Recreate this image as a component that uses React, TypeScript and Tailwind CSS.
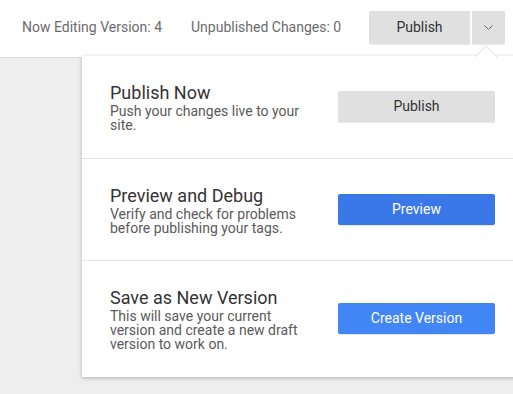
import React from "react";

const sections = [
  {
    title: "Publish Now",
    desc: "Push your changes live to your site.",
    button: "Publish",
    primary: false,
    pb: "pb-[26px]",
  },
  {
    title: "Preview and Debug",
    desc: "Verify and check for problems before publishing your tags.",
    button: "Preview",
    primary: true,
    dark: true,
    pb: "pb-[25px]",
  },
  {
    title: "Save as New Version",
    desc: "This will save your current version and create a new draft version to work on.",
    button: "Create Version",
    primary: true,
    pb: "pb-[26px]",
  },
];

export default function App() {
  return (
    <div
      className="relative h-[394px] w-[513px] overflow-hidden bg-[#eeeeee]"
      style={{ fontFamily: "Roboto, 'Liberation Sans', sans-serif" }}
    >
      <header className="flex h-[58px] items-center border-b border-[#dcdcdc] bg-white pb-[2px] pl-[22px] text-[14px] text-[#6b6b6b]">
        <span>Now Editing Version: 4</span>
        <span className="ml-[29px]">Unpublished Changes: 0</span>
        <div className="ml-auto mr-[8px] flex gap-[2px]">
          <button className="h-[33px] w-[101px] rounded-l-[2px] bg-[#e0e0e0] text-[14px] text-[#333] shadow-[0_1px_1px_rgba(0,0,0,0.08)]">
            Publish
          </button>
          <button className="flex h-[33px] w-[33px] items-center justify-center rounded-r-[2px] bg-[#e0e0e0] shadow-[0_1px_1px_rgba(0,0,0,0.08)]">
            <svg width="9" height="5" viewBox="0 0 9 5" fill="none">
              <path d="M0.5 0.5l4 4 4-4" stroke="#666" strokeWidth="1" />
            </svg>
          </button>
        </div>
      </header>

      <div className="absolute left-[82px] top-[56px] w-[445px] bg-white shadow-[0_1px_4px_rgba(0,0,0,0.25)]">
        <svg
          className="absolute right-[30px] top-[-10px]"
          width="22"
          height="11"
          viewBox="0 0 22 11"
        >
          <path d="M0 11L11 0l11 11z" fill="#fff" />
          <path d="M0 11L11 0l11 11" fill="none" stroke="#e0e0e0" strokeWidth="1" />
        </svg>
        {sections.map((s, i) => (
          <div
            key={s.title}
            className={`flex items-center pt-[26px] pl-[28px] ${s.pb} ${i < 2 ? "border-b border-[#e3e3e3]" : ""}`}
          >
            <div className="w-[210px]">
              <div className="text-[18px] leading-[22px] text-[#333]">{s.title}</div>
              <div className="w-[200px] text-[14px] leading-[14px] text-[#5a5a5a]">{s.desc}</div>
            </div>
            <button
              className={`mb-[2px] ml-[18px] h-[31px] w-[157px] rounded-[2px] text-[14px] shadow-[0_1px_1px_rgba(0,0,0,0.1)] ${
                s.primary
                  ? s.dark
                    ? "bg-[#3b78e7] text-white"
                    : "bg-[#4285f4] text-white"
                  : "bg-[#e0e0e0] text-[#333]"
              }`}
            >
              {s.button}
            </button>
          </div>
        ))}
      </div>
    </div>
  );
}
